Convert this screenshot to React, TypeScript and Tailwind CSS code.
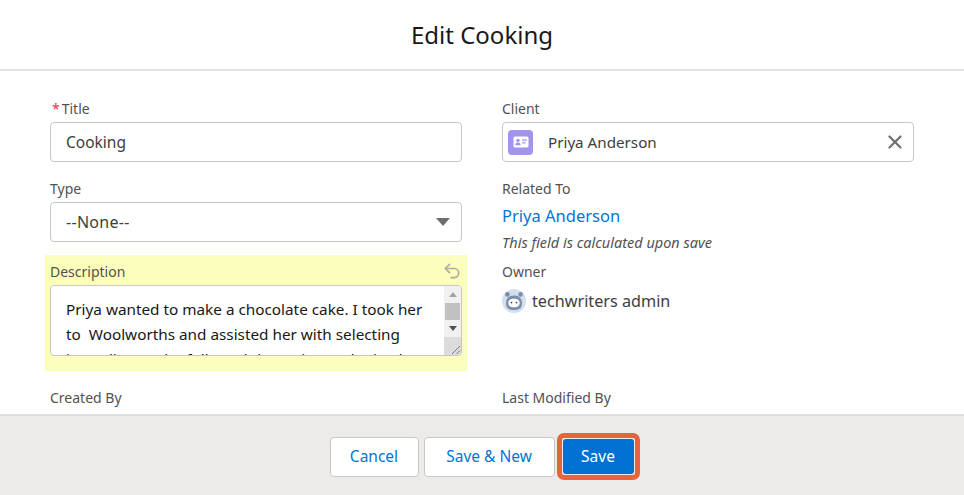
import { Undo2, X } from "lucide-react";
import type { ReactNode } from "react";

function Label({ children }: { children: ReactNode }) {
  return <div className="h-5 text-[14px] leading-[22px] text-[#54514f]">{children}</div>;
}

function ContactIcon() {
  return (
    <div className="flex h-[25px] w-[25px] shrink-0 items-center justify-center rounded-[4px] bg-[#a094ed]">
      <svg width="16" height="12" viewBox="0 0 16 12">
        <rect x="0.5" y="0.5" width="15" height="11" rx="1.5" fill="#fff" />
        <circle cx="5" cy="4.4" r="1.7" fill="#a094ed" />
        <path d="M2.3 9.2c0-1.7 1.2-2.6 2.7-2.6s2.7.9 2.7 2.6z" fill="#a094ed" />
        <rect x="9.2" y="3.4" width="4.6" height="1.3" fill="#a094ed" />
        <rect x="9.2" y="6.2" width="3.4" height="1.3" fill="#a094ed" />
      </svg>
    </div>
  );
}

function Avatar() {
  return (
    <svg width="24" height="24" viewBox="0 0 24 24" className="shrink-0">
      <circle cx="12" cy="12" r="12" fill="#d3dfee" />
      <circle cx="5.4" cy="5.4" r="2.3" fill="#7d8fa8" />
      <circle cx="18.6" cy="5.4" r="2.3" fill="#7d8fa8" />
      <path d="M4 14.5c0-5.4 3.4-8 8-8s8 2.6 8 8-3.6 6.5-8 6.5-8-1.1-8-6.5z" fill="#7d8fa8" />
      <path d="M6.3 14c0-2.8 2.3-4.2 5.700-4.200s5.700 1.400 5.700 4.200-2.300 4.300-5.700 4.300-5.700-1.500-5.700-4.300z" fill="#fff" />
      <circle cx="9.5" cy="13.6" r="0.9" fill="#33475f" />
      <circle cx="14.5" cy="13.6" r="0.9" fill="#33475f" />
    </svg>
  );
}

function Scrollbar() {
  return (
    <div className="flex w-[17px] shrink-0 flex-col bg-[#f1f1f1]">
      <div className="flex h-[17px] items-center justify-center">
        <div className="h-0 w-0 border-x-[4px] border-b-[5px] border-x-transparent border-b-[#a3a3a3]" />
      </div>
      <div className="mx-px h-[17px] bg-[#c1c1c1]" />
      <div className="flex h-[17px] items-center justify-center">
        <div className="h-0 w-0 border-x-[4px] border-t-[5px] border-x-transparent border-t-[#505050]" />
      </div>
      <div className="flex flex-1 items-end justify-end bg-[#dcdcdc]">
        <svg width="12" height="12" viewBox="0 0 12 12">
          <path d="M3 11 11 3M7.5 11 11 7.5" stroke="#7a7a7a" strokeWidth="1" />
        </svg>
      </div>
    </div>
  );
}

export default function App() {
  return (
    <div className="flex h-screen flex-col overflow-hidden bg-white font-['Noto_Sans','Open_Sans',sans-serif] text-[#3e3e3c]">
      <header className="flex h-[71px] shrink-0 items-center justify-center border-b-2 border-[#e3e3e3] pt-px">
        <h1 className="text-[24px] leading-8 text-[#181818]">Edit Cooking</h1>
      </header>

      <div className="grid min-h-0 flex-1 grid-cols-[412px_412px] justify-center gap-x-10 overflow-hidden pt-[27px]">
        <div>
          <Label>
            <span className="ml-0.5 mr-[2px] text-[#e4334f]">*</span>Title
          </Label>
          <div className="mt-1 flex h-10 items-center rounded border border-[#c9c7c5] px-[15px] pt-px text-[15.5px]">
            Cooking
          </div>

          <div className="mt-4">
            <Label>Type</Label>
          </div>
          <div className="mt-1 flex h-10 items-center justify-between rounded border border-[#c9c7c5] pl-[15px] pr-[11px] text-[16px] tracking-[0.3px]">
            <span>--None--</span>
            <div className="h-0 w-0 border-x-[7px] border-t-[8px] border-x-transparent border-t-[#706e6b]" />
          </div>

          <div className="-mx-[5px] mt-[13px] h-[116px] bg-[#fbffbb] px-[5px] pt-1.5">
            <div className="flex items-center justify-between">
              <Label>Description</Label>
              <Undo2 size={20} className="text-[#aeaca9]" />
            </div>
            <div className="mt-1 flex h-[71px] overflow-hidden rounded border border-[#c9c7c5] bg-white">
              <div className="min-w-0 flex-1 overflow-hidden pl-[15px] pt-[11px] text-[15.3px] leading-[25px] text-[#181818]">
                <div className="whitespace-nowrap">Priya wanted to make a chocolate cake. I took her</div>
                <div className="whitespace-pre">to  Woolworths and assisted her with selecting</div>
                <div className="whitespace-nowrap">ingredients. She followed the recipe and mixed</div>
              </div>
              <Scrollbar />
            </div>
          </div>

          <div className="mt-4">
            <Label>Created By</Label>
          </div>
        </div>

        <div>
          <Label>Client</Label>
          <div className="mt-1 flex h-10 items-center rounded border border-[#c9c7c5] pl-[5px] pr-[7px] text-[15.2px]">
            <ContactIcon />
            <span className="ml-[15px] flex-1">Priya Anderson</span>
            <X size={22} strokeWidth={2.4} className="text-[#706e6b]" />
          </div>

          <div className="mt-4">
            <Label>Related To</Label>
          </div>
          <div className="mt-[6px] h-6 text-[16.5px] leading-6 text-[#0176d3]">Priya Anderson</div>
          <div className="mt-[6px] h-4 text-[14.5px] leading-4 italic text-[#54514f]">
            This field is calculated upon save
          </div>

          <div className="mt-[11px]">
            <Label>Owner</Label>
          </div>
          <div className="mt-[8px] flex h-6 items-center gap-[6px] text-[16.2px]">
            <Avatar />
            <span>techwriters admin</span>
          </div>

          <div className="mt-[74px]">
            <Label>Last Modified By</Label>
          </div>
        </div>
      </div>

      <footer className="flex h-[81px] shrink-0 items-center justify-center border-t-2 border-[#dfdddb] bg-[#ecebea] pl-[5px] pt-[2px] text-[15.5px]">
        <button className="h-10 w-[89px] rounded border border-[#c9c7c5] bg-white text-[#0176d3]">Cancel</button>
        <button className="ml-[5px] h-10 w-[131px] rounded border border-[#c9c7c5] bg-white text-[#0176d3]">
          Save &amp; New
        </button>
        <div className="ml-[2px] rounded-[7px] border-[5px] border-[#e4643c] p-px">
          <button className="block h-[35px] w-[71px] rounded-[3px] bg-[#0070d2] text-white">Save</button>
        </div>
      </footer>
    </div>
  );
}
